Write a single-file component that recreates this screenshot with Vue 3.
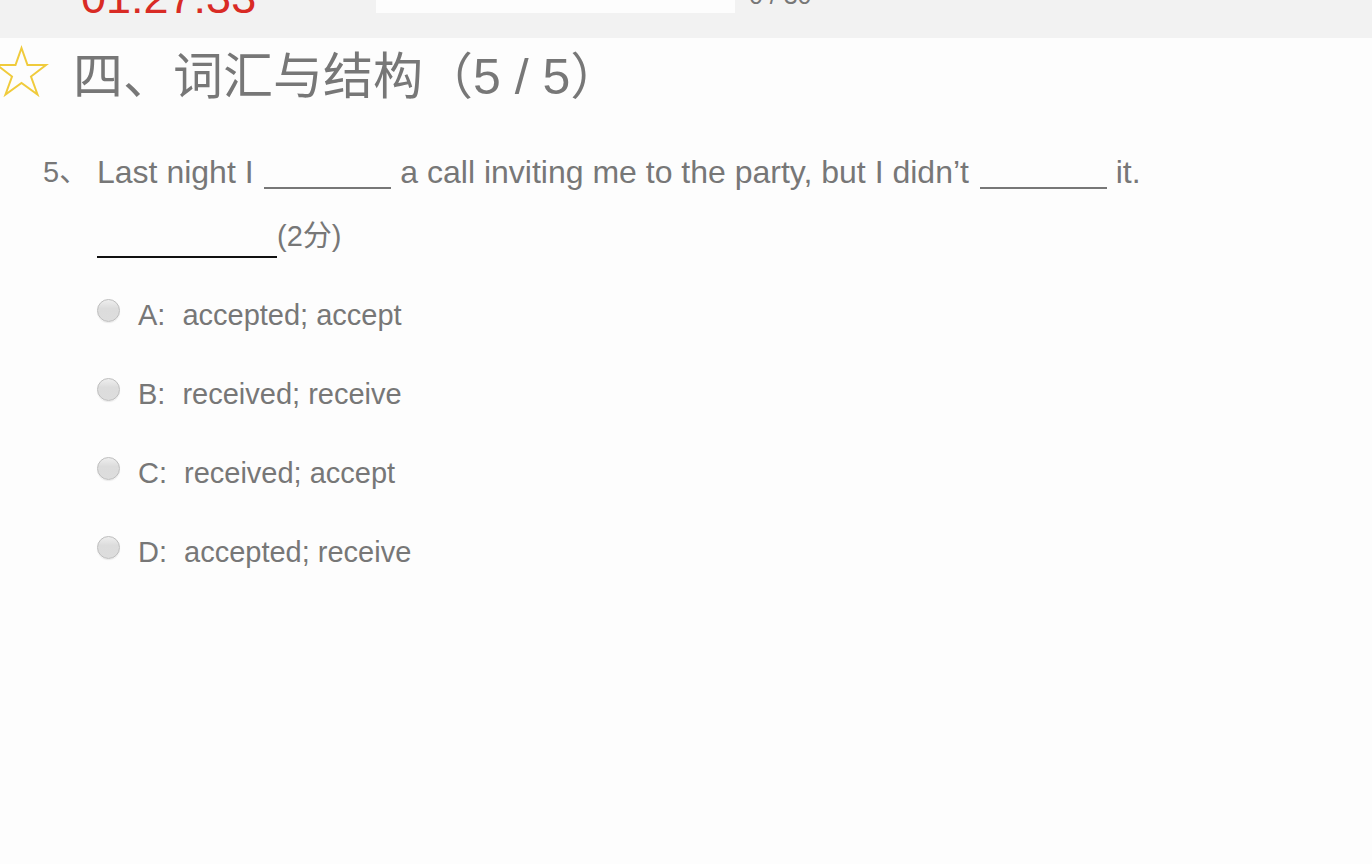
<script setup>
import { ref } from 'vue'

const answer = ref('')
const options = [
  { key: 'A', text: 'accepted; accept' },
  { key: 'B', text: 'received; receive' },
  { key: 'C', text: 'received; accept' },
  { key: 'D', text: 'accepted; receive' },
]
</script>

<template>
  <div class="exam">
    <header class="status">
      <time class="timer">01:27:33</time>
      <div class="progress" role="progressbar" aria-label="答题进度" aria-valuenow="0" aria-valuemax="30"></div>
      <span class="count">0 / 30</span>
    </header>
    <main>
      <div class="heading">
        <svg class="star" viewBox="0 0 56 56" aria-hidden="true">
          <path d="M28.500 4 L34.500 21 H53 L38 32.500 L44.500 50.500 L28.500 39 L12.500 50.500 L19 32.500 L4 21 H22.500 Z" />
        </svg>
        <h1>四、词汇与结构（5 / 5）</h1>
      </div>
      <section class="question">
        <span class="number">5、</span>
        <div class="body">
          <p class="stem">Last night I <span class="blank"></span> a call inviting me to the party, but I didn’t <span class="blank"></span> it.</p>
          <p class="score"><span class="answer-line"></span>(2分)</p>
          <div class="options" role="radiogroup" aria-label="选项">
            <label v-for="o in options" :key="o.key" class="option">
              <input v-model="answer" type="radio" name="answer" :value="o.key" />
              <span class="letter">{{ o.key }}:</span>
              <span>{{ o.text }}</span>
            </label>
          </div>
        </div>
      </section>
    </main>
  </div>
</template>

<style>
body {
  background: #fdfdfd;
}
</style>

<style scoped>
.exam {
  min-height: 100vh;
  overflow: hidden;
  color: #777;
  background: #fdfdfd;
  font-family: "Liberation Sans", "Noto Sans CJK SC", sans-serif;
}
.status {
  display: flex;
  align-items: flex-end;
  height: 38px;
  box-sizing: border-box;
  padding: 0 0 14px 81px;
  overflow: hidden;
  background: #f2f2f2;
}
.timer {
  width: 295px;
  flex: none;
  margin-bottom: 2px;
  font-size: 45px;
  line-height: 48px;
  color: #d92b25;
}
.progress {
  width: 27.8%;
  height: 40px;
  margin-bottom: 11px;
  background: #fdfdfd;
}
.count {
  margin: 0 0 15px 14px;
  font-size: 25px;
  line-height: 28px;
}
.heading {
  display: flex;
  align-items: center;
  height: 78px;
  gap: 24px;
}
.star {
  width: 56px;
  height: 56px;
  flex: none;
  margin: -10px 0 0 -7px;
  fill: none;
  stroke: #f0cb3c;
  stroke-width: 2;
}
h1 {
  margin: 0;
  font-size: 50px;
  font-weight: 400;
  line-height: 76px;
}
.question {
  display: flex;
  padding: 24px 24px 0 43px;
}
.number {
  width: 54px;
  flex: none;
  font-size: 29px;
  line-height: 64px;
  white-space: nowrap;
}
.body {
  flex: 1;
}
p {
  margin: 0;
}
.stem {
  font-size: 32px;
  line-height: 64px;
}
.blank {
  display: inline-block;
  width: 127px;
  height: 14px;
  margin-left: 2px;
  border-bottom: 2px solid #777;
  vertical-align: -6px;
}
.score {
  font-size: 29px;
  line-height: 64px;
}
.answer-line {
  display: inline-block;
  width: 180px;
  height: 16px;
  border-bottom: 2px solid #111;
  vertical-align: -12px;
}
.options {
  padding-top: 7px;
}
.option {
  display: flex;
  align-items: center;
  height: 79px;
  font-size: 29px;
  line-height: 40px;
}
input {
  appearance: none;
  width: 23px;
  height: 23px;
  flex: none;
  margin: 0 18px 8px 0;
  border: 1px solid #bdbdbd;
  border-radius: 50%;
  background: linear-gradient(#eee, #dcdcdc 40%, #ddd);
  box-shadow: 0 1px 1px #ececec;
}
input:checked {
  background: radial-gradient(#555 30%, #ddd 34%);
}
.letter {
  margin-right: 17px;
}
</style>
